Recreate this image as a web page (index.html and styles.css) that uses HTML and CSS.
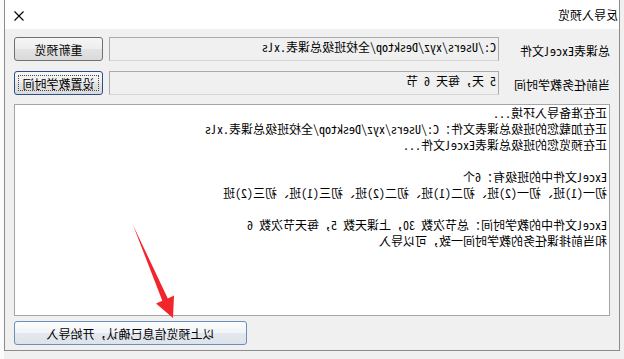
FILE: index.html
```html
<!DOCTYPE html>
<html lang="zh-CN">
<head>
    <meta charset="UTF-8">
    <meta name="viewport" content="width=device-width, initial-scale=1.0">
    <title>导入预览</title>
    <link rel="stylesheet" href="styles.css">
</head>
<body>
    <!-- the screenshot is mirrored, so the dialog is built normally and flipped -->
    <div class="screen">
        <div class="dialog">
            <div class="titlebar">
                <span class="title">反导入预览</span>
                <span class="close">
                    <svg width="10" height="10" viewBox="0 0 10 10">
                        <path d="M0.5 0.5 L9.5 9.5 M9.5 0.5 L0.5 9.5" stroke="#000" stroke-width="1.1" fill="none"/>
                    </svg>
                </span>
            </div>
            <div class="content">
                <div class="form-row">
                    <div class="form-label">总课表Excel文件</div>
                    <div class="field">C:/Users/xyz/Desktop/全校班级总课表.xls</div>
                    <button class="btn">重新预览</button>
                </div>
                <div class="form-row">
                    <div class="form-label">当前任务教学时间</div>
                    <div class="field">5 天，每天 6 节</div>
                    <button class="btn btn-focus"><span class="focus-ring">设置教学时间</span></button>
                </div>
                <div class="log">
                    <div>正在准备导入环境...</div>
                    <div>正在加载您的班级总课表文件：C:/Users/xyz/Desktop/全校班级总课表.xls</div>
                    <div>正在预览您的班级总课表Excel文件...</div>
                    <div>&nbsp;</div>
                    <div>Excel文件中的班级有：6个</div>
                    <div>初一(1)班、初一(2)班、初二(1)班、初二(2)班、初三(1)班、初三(2)班</div>
                    <div>&nbsp;</div>
                    <div>Excel文件中的教学时间：总节次数 30，上课天数 5，每天节次数 6</div>
                    <div>和当前排课任务的教学时间一致，可以导入</div>
                </div>
                <div class="actions">
                    <button class="btn btn-default">以上预览信息已确认，开始导入</button>
                </div>
            </div>
        </div>
    </div>

    <svg class="arrow" width="624" height="359" viewBox="0 0 624 359">
        <polygon points="133,225 167.8,298.4 174,295.5 173,318 156,303.5 162.3,300.8" fill="#f2262a"/>
    </svg>
</body>
</html>
```

FILE: styles.css
```css
* {
    margin: 0;
    padding: 0;
    box-sizing: border-box;
}

body {
    position: relative;
    width: 624px;
    height: 359px;
    overflow: hidden;
    background: #f3f3f3;
    font-family: "Noto Sans Mono CJK SC", "Noto Sans CJK SC", monospace;
    font-size: 12px;
    color: #000;
}

.screen {
    width: 624px;
    height: 359px;
    transform: scaleX(-1);
    background: linear-gradient(90deg, #f0f0f0 0, #f0f0f0 620px, #fbfbfb 620px);
}

.dialog {
    margin-left: 4px;
    width: 616px;
    height: 351px;
    border: 1px solid #8c8c8c;
    border-top: none;
    background: #f0f0f0;
    display: flex;
    flex-direction: column;
}

.titlebar {
    height: 29px;
    background: #ffffff;
    display: flex;
    align-items: center;
    justify-content: space-between;
    padding: 0 9px 0 1px;
}

.title {
    line-height: 16px;
    padding-top: 1px;
}

.close {
    display: flex;
    padding-top: 3px;
}

.content {
    flex: 1;
    padding: 8px 9px 5px 9px;
    display: flex;
    flex-direction: column;
}

.form-row {
    display: grid;
    grid-template-columns: 105px 1fr 89px;
    column-gap: 6px;
    height: 24px;
    align-items: center;
    margin-bottom: 10px;
}

.form-row + .form-row {
    margin-bottom: 9px;
}

.form-label {
    line-height: 16px;
    padding-top: 4px;
    white-space: nowrap;
}

.field {
    height: 24px;
    background: #f0f0f0;
    border: 1px solid #ababab;
    border-bottom-color: #d6d6d6;
    padding: 1px 2px;
    line-height: 16px;
    white-space: nowrap;
    overflow: hidden;
}

.btn {
    height: 24px;
    border: 1px solid #707070;
    border-radius: 3px;
    background: linear-gradient(#f6f6f6 0%, #ededed 50%, #e3e3e3 50%, #dadada 100%);
    font-family: inherit;
    font-size: 12px;
    color: #000;
    display: flex;
    align-items: center;
    justify-content: center;
}

.btn-focus {
    border-color: #2c4f8a;
    padding: 3px;
}

.focus-ring {
    flex: 1;
    height: 100%;
    border: 1px dotted #4a4a4a;
    border-radius: 1px;
    display: flex;
    align-items: center;
    justify-content: center;
}

.btn-default {
    width: 233px;
    border-color: #6a8fb8;
    background: linear-gradient(#fbfcfe 0%, #f1f4f8 50%, #e4e9ef 50%, #dde3ea 100%);
}

.log {
    height: 212px;
    background: #ffffff;
    border: 1px solid #a5a5a5;
    padding: 0 2px;
    line-height: 16px;
    white-space: nowrap;
    overflow: hidden;
}

.actions {
    margin-top: 5px;
    display: flex;
    justify-content: flex-end;
}

.arrow {
    position: absolute;
    left: 0;
    top: 0;
    pointer-events: none;
}
```
